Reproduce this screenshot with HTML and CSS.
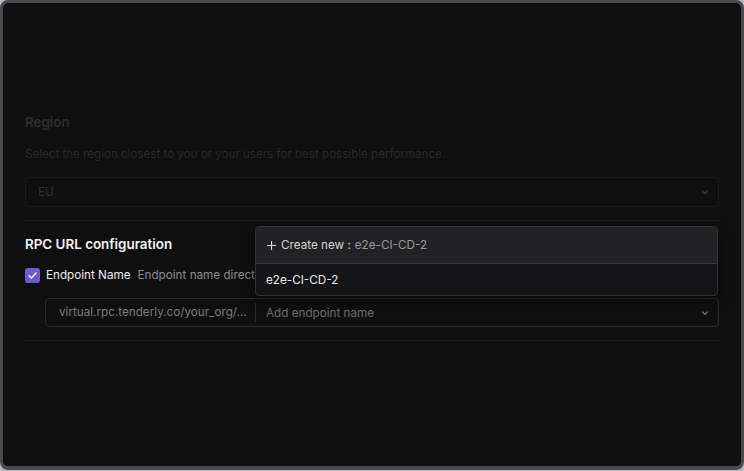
FILE: index.html
```html
<!DOCTYPE html>
<html lang="en">
<head>
    <meta charset="UTF-8">
    <meta name="viewport" content="width=device-width, initial-scale=1.0">
    <title>Create Virtual TestNet</title>
    <link rel="stylesheet" href="styles.css">
</head>
<body>
    <div class="frame">
        <section class="region-section">
            <h2 class="section-title dim">Region</h2>
            <p class="section-desc">Select the region closest to you or your users for best possible performance.</p>
            <div class="select-box dim-box">
                <span class="select-value">EU</span>
                <svg class="chevron" width="10" height="10" viewBox="0 0 10 10"><path d="M2.5 4 L5 6.5 L7.5 4" fill="none" stroke="#3c3c3c" stroke-width="1.2" stroke-linecap="round" stroke-linejoin="round"/></svg>
            </div>
        </section>

        <div class="divider"></div>

        <section class="rpc-section">
            <h2 class="section-title">RPC URL configuration</h2>
            <div class="check-row">
                <span class="checkbox">
                    <svg width="11" height="11" viewBox="0 0 11 11"><path d="M2 5.8 L4.4 8 L9 3" fill="none" stroke="#fff" stroke-width="1.5" stroke-linecap="round" stroke-linejoin="round"/></svg>
                </span>
                <span class="check-label">Endpoint Name</span>
                <span class="check-hint">Endpoint name directly follows your project slug in the RPC URL.</span>
            </div>
            <div class="url-input">
                <span class="url-prefix">virtual.rpc.tenderly.co/your_org/...</span>
                <span class="url-name">Add endpoint name</span>
                <svg class="chevron" width="10" height="10" viewBox="0 0 10 10"><path d="M2.5 4 L5 6.5 L7.5 4" fill="none" stroke="#6a6a6a" stroke-width="1.2" stroke-linecap="round" stroke-linejoin="round"/></svg>
            </div>

            <div class="dropdown">
                <div class="dropdown-item create">
                    <svg class="plus" width="9" height="9" viewBox="0 0 9 9"><path d="M4.5 0.5 V8.5 M0.5 4.5 H8.5" fill="none" stroke="#d6d6d6" stroke-width="1.2" stroke-linecap="round"/></svg>
                    <span>Create new :</span>
                    <span class="create-value">e2e-CI-CD-2</span>
                </div>
                <div class="dropdown-item">e2e-CI-CD-2</div>
            </div>
        </section>

        <div class="divider"></div>
    </div>
</body>
</html>
```

FILE: styles.css
```css
html, body {
    margin: 0;
    padding: 0;
    background: #b9b9be;
}

body {
    font-family: Inter, 'Noto Sans', sans-serif;
    width: 744px;
    height: 471px;
    overflow: hidden;
}

.frame {
    box-sizing: border-box;
    width: 744px;
    height: 470px;
    border: 3px solid #4a4a51;
    border-bottom-width: 4px;
    border-radius: 8px;
    background: #0f0f10;
    padding: 109px 22px 0;
}

.section-title {
    margin: 0;
    font-size: 13.4px;
    line-height: 20px;
    font-weight: 600;
    color: #f2f2f2;
}

.section-title.dim {
    color: #2f2f30;
}

.section-desc {
    margin: 13px 0 0;
    font-size: 11.6px;
    line-height: 18px;
    color: #2a2a2b;
}

.select-box {
    box-sizing: border-box;
    height: 30px;
    margin-top: 14px;
    border: 1px solid #1c1c1e;
    border-radius: 4px;
    display: flex;
    align-items: center;
    padding: 0 8px 0 12px;
}

.select-value {
    flex: 1;
    font-size: 11.7px;
    color: #333335;
}

.chevron {
    flex: none;
}

.divider {
    height: 1px;
    background: #1a1a1b;
    margin-top: 13px;
}

.rpc-section {
    position: relative;
    padding-top: 13px;
}

.check-row {
    display: flex;
    align-items: center;
    height: 20px;
    margin-top: 11px;
    white-space: nowrap;
    overflow: hidden;
}

.checkbox {
    flex: none;
    width: 15px;
    height: 15px;
    border-radius: 3px;
    background: #6b5bd4;
    display: flex;
    align-items: center;
    justify-content: center;
}

.check-label {
    margin-left: 6px;
    font-size: 11.7px;
    color: #ececec;
}

.check-hint {
    margin-left: 7px;
    font-size: 11.7px;
    color: #8c8c8e;
}

.url-input {
    box-sizing: border-box;
    height: 29px;
    margin: 13px 0 0 20px;
    border: 1px solid #2a2a2c;
    border-radius: 4px;
    display: flex;
    align-items: center;
    padding-right: 8px;
    font-size: 11.7px;
}

.url-prefix {
    flex: none;
    box-sizing: border-box;
    width: 210px;
    padding-left: 13px;
    color: #7b7b7d;
    border-right: 1px solid #2c2c2e;
    line-height: 19px;
    white-space: nowrap;
}

.url-name {
    flex: 1;
    padding-left: 10px;
    color: #6c6c6e;
}

.dropdown {
    position: absolute;
    top: 5px;
    left: 230px;
    width: 463px;
    box-sizing: border-box;
    border: 1px solid #313133;
    border-radius: 4px;
    background: #151517;
    overflow: hidden;
    box-shadow: 0 4px 12px rgba(0, 0, 0, 0.5);
}

.dropdown-item {
    height: 31px;
    display: flex;
    align-items: center;
    padding: 0 10px;
    font-size: 11.7px;
    color: #e8e8e8;
}

.dropdown-item.create {
    height: 36px;
    background: #222224;
    border-bottom: 1px solid #38383b;
    color: #d6d6d6;
}

.plus {
    flex: none;
    margin: 0 5px 0 1px;
}

.create-value {
    margin-left: 4px;
    color: #9a9a9c;
}
```
